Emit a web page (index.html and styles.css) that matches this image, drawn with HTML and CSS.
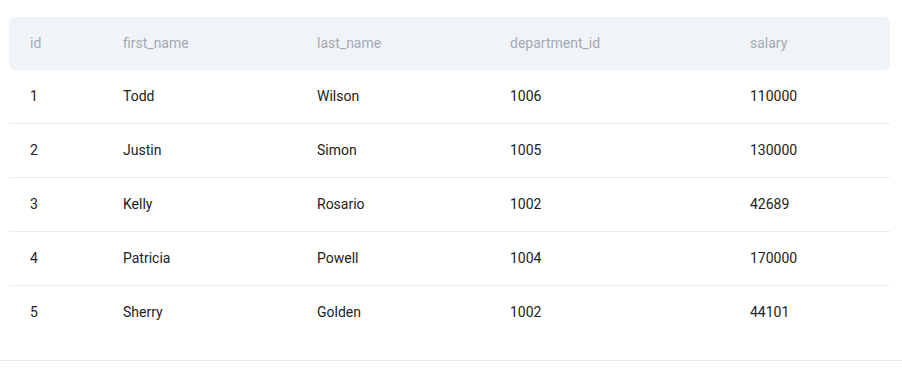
FILE: index.html
```html
<!DOCTYPE html>
<html>
<head>
<meta charset="utf-8">
<link rel="stylesheet" href="styles.css">
</head>
<body>
<div class="wrap">
<table class="grid">
<colgroup><col class="c1"><col class="c2"><col class="c3"><col class="c4"><col class="c5"></colgroup>
<thead>
<tr><th>id</th><th>first_name</th><th>last_name</th><th>department_id</th><th>salary</th></tr>
</thead>
<tbody>
<tr><td>1</td><td>Todd</td><td>Wilson</td><td>1006</td><td>110000</td></tr>
<tr><td>2</td><td>Justin</td><td>Simon</td><td>1005</td><td>130000</td></tr>
<tr><td>3</td><td>Kelly</td><td>Rosario</td><td>1002</td><td>42689</td></tr>
<tr><td>4</td><td>Patricia</td><td>Powell</td><td>1004</td><td>170000</td></tr>
<tr><td>5</td><td>Sherry</td><td>Golden</td><td>1002</td><td>44101</td></tr>
</tbody>
</table>
</div>
</body>
</html>
```
FILE: styles.css
```css
html, body { margin: 0; padding: 0; background: #fff; }
body { font-family: Roboto, "Noto Sans", sans-serif; font-size: 14px; color: #222; }
.wrap { padding: 17px 12px 20px 9px; border-bottom: 1px solid #e6eaf1; }
.grid { width: 881px; border-collapse: separate; border-spacing: 0; table-layout: fixed; }
.c1 { width: 93px; }
.c2 { width: 194px; }
.c3 { width: 193px; }
.c4 { width: 240px; }
.c5 { width: 161px; }
.grid th { box-sizing: border-box; background: #f1f4f7; color: #a3a9b4; font-weight: 400; text-align: left; height: 53px; padding: 0 0 2px 21px; }
.grid th:first-child { border-radius: 6px 0 0 6px; }
.grid th:last-child { border-radius: 0 6px 6px 0; }
.grid td { box-sizing: border-box; height: 54px; padding: 0 0 2px 21px; border-bottom: 1px solid #e8ecf2; }
.grid tbody tr:last-child td { border-bottom: none; }
```
